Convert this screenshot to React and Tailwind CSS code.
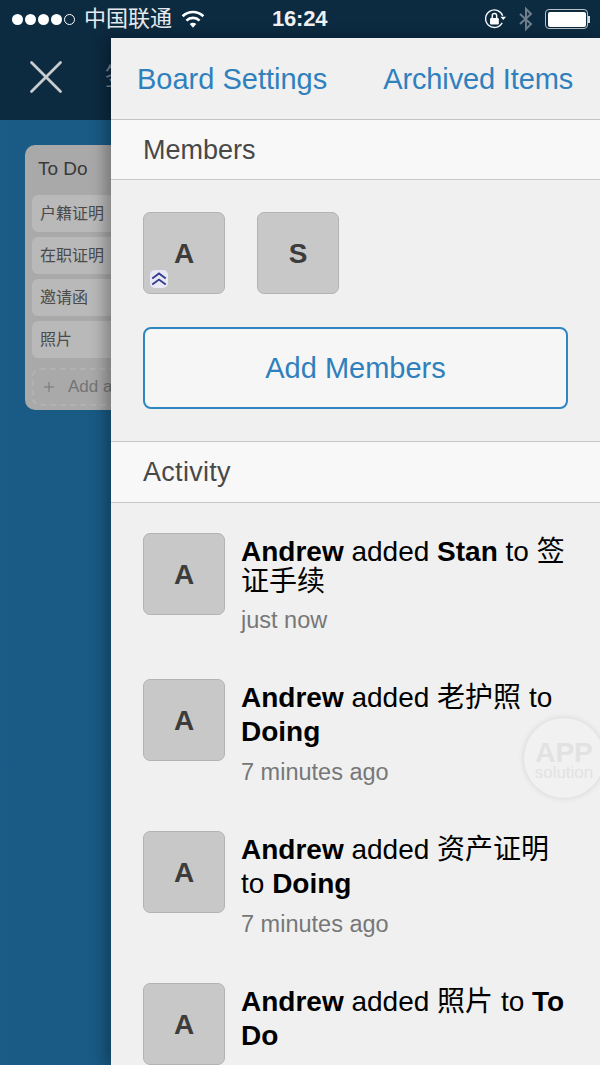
import { Plus, X } from "lucide-react";

const SANS = "font-['Liberation_Sans','Noto_Sans_CJK_SC',sans-serif]";

const cards = ["户籍证明", "在职证明", "邀请函", "照片"];

const activity = [
  {
    id: 1,
    lines: "pt-[4px] leading-[30px]",
    gap: "h-[146px]",
    time: "just now",
    text: (
      <>
        <b>Andrew</b> added <b>Stan</b> to 签证手续
      </>
    ),
  },
  {
    id: 2,
    lines: "pt-[2px] leading-[34px]",
    gap: "h-[152px]",
    time: "7 minutes ago",
    text: (
      <>
        <b>Andrew</b> added 老护照 to <b>Doing</b>
      </>
    ),
  },
  {
    id: 3,
    lines: "pt-[2px] leading-[34px]",
    gap: "h-[152px]",
    time: "7 minutes ago",
    text: (
      <>
        <b>Andrew</b> added 资产证明 to <b>Doing</b>
      </>
    ),
  },
  {
    id: 4,
    lines: "pt-[2px] leading-[34px]",
    gap: "h-[152px]",
    time: "",
    text: (
      <>
        <b>Andrew</b> added 照片 to <b>To Do</b>
      </>
    ),
  },
];

const Avatar = ({ letter, children }) => (
  <div className="relative flex h-[82px] w-[82px] shrink-0 items-center justify-center rounded-[7px] border border-[#b4b4b4] bg-[#c8c8c8] pt-[1px] text-[28px] font-bold text-[#3c3c3c]">
    {letter}
    {children}
  </div>
);

const StatusBar = () => (
  <div className="flex h-[38px] shrink-0 items-center bg-[#0c2a40] pl-[12px] pr-[10px] text-white">
    <div className="flex items-center gap-[2px]">
      {[0, 1, 2, 3].map((i) => (
        <span key={i} className="h-[11px] w-[11px] rounded-full bg-white" />
      ))}
      <span className="h-[11px] w-[11px] rounded-full border border-white" />
    </div>
    <span className="ml-[9px] text-[22px] leading-none text-[#e6eaed]">中国联通</span>
    <svg className="ml-[9px]" width="24" height="20" viewBox="0 0 22 18" fill="none" stroke="white" strokeWidth="2.4">
      <path d="M1.5 6.5a13.5 13.5 0 0 1 19 0" />
      <path d="M5 10.5a8.5 8.5 0 0 1 12 0" />
      <path d="M11 17l-3-3.4a4.2 4.2 0 0 1 6 0z" fill="white" stroke="none" />
    </svg>
    <span className="ml-[67px] text-[22px] font-bold leading-none tracking-[-0.2px] text-[#f0f0f0]">16:24</span>
    <div className="ml-auto flex items-center">
      <svg width="22" height="22" viewBox="0 0 20 20" fill="none">
        <path d="M16.5 13.5A8 8 0 1 1 17 7" stroke="white" strokeWidth="1.2" />
        <path d="M15 8h5l-2.5 3z" fill="white" />
        <rect x="5.5" y="9" width="8" height="6" rx="1" fill="white" />
        <path d="M7.5 9V7a2 2 0 0 1 4 0v2" stroke="white" strokeWidth="1.3" />
      </svg>
      <svg className="ml-[12px]" width="16" height="28" viewBox="0 0 16 24" fill="none" stroke="#6f7f8b" strokeWidth="2">
        <path d="M2 7l11 10-5 5V2l5 5L2 17" />
      </svg>
      <div className="ml-[11px] flex items-center">
        <div className="h-[20px] w-[43px] rounded-[4px] border border-[#b9c1c6] p-[1.5px]">
          <div className="h-full w-full rounded-[2px] bg-white" />
        </div>
        <div className="h-[7px] w-[2px] bg-[#d8dde0]" />
      </div>
    </div>
  </div>
);

const Board = () => (
  <div className="min-h-0 flex-1 bg-[linear-gradient(90deg,#1a5c87,#154f76)] pl-[25px] pt-[25px]">
    <div className="h-[265px] w-[200px] rounded-[10px] bg-[#a9a9a9] px-[7px]">
      <div className="h-[50px] pl-[6px] pt-[13px] text-[19px] leading-[22px] text-[#3a3a3a]">To Do</div>
      <div className="flex flex-col gap-[5px]">
        {cards.map((card) => (
          <div key={card} className="h-[37px] rounded-[6px] bg-[#b9b9b9] pl-[8px] text-[16px] leading-[37px] text-[#4a4a4a]">
            {card}
          </div>
        ))}
      </div>
      <div className="mt-[10px] flex h-[38px] items-center rounded-[8px] border-2 border-dashed border-[#b2b2b2] pl-[7px] text-[17px] text-[#747474]">
        <Plus size={16} strokeWidth={1.5} />
        <span className="ml-[11px]">Add a card</span>
      </div>
    </div>
  </div>
);

export default function App() {
  return (
    <div className={`relative flex h-[1065px] w-[600px] flex-col overflow-hidden ${SANS}`}>
      <StatusBar />
      <div className="flex h-[82px] shrink-0 items-center bg-[#0c2a40] pb-[4px] pl-[17px]">
        <X size={58} strokeWidth={1.15} className="text-[#c9cdd0]" />
        <span className="ml-[30px] text-[24px] text-[#7c8993]">签</span>
      </div>
      <Board />

      {/* drawer over the board */}
      <div className="absolute bottom-0 left-[111px] right-0 top-[38px] bg-[#f0f0f0] shadow-[-6px_0_14px_rgba(0,0,0,0.3)]">
        <div className="flex h-[82px] items-center justify-between border-b border-[#c4c4c4] pl-[26px] pr-[27px] pt-[2px] text-[29px] text-[#2f80bd]">
          <span>Board Settings</span>
          <span className="tracking-[-0.15px]">Archived Items</span>
        </div>
        <div className="flex h-[60px] items-center border-b border-[#c8c8c8] bg-[#f8f8f8] pl-[32px] pt-[2px] text-[27px] text-[#484848]">
          Members
        </div>
        <div className="px-[32px] pt-[32px]">
          <div className="flex gap-[32px]">
            <Avatar letter="A">
              <div className="absolute bottom-[5px] left-[6px] flex h-[18px] w-[18px] items-center justify-center rounded-[5px] bg-[#e9e9f6]">
                <svg width="16" height="16" viewBox="0 0 13 13" fill="none" stroke="#333a8c" strokeWidth="1.5">
                  <path d="M1 6L6.5 2l5.5 4" />
                  <path d="M1 11l5.5-4 5.5 4" />
                </svg>
              </div>
            </Avatar>
            <Avatar letter="S" />
          </div>
          <div className="mt-[33px] flex h-[82px] w-[425px] items-center justify-center rounded-[8px] border-2 border-[#2f86c0] bg-[#f6f6f6] pt-[2px] text-[29px] text-[#2f80bd]">
            Add Members
          </div>
        </div>
        <div className="mt-[32px] flex h-[62px] items-center border-y border-[#c8c8c8] bg-[#f8f8f8] pl-[32px] text-[27px] tracking-[0.3px] text-[#484848]">
          Activity
        </div>
        <div className="pl-[32px] pt-[30px]">
          {activity.map((item) => (
            <div key={item.id} className={`flex ${item.gap}`}>
              <Avatar letter="A" />
              <div className="ml-[16px] w-[330px]">
                <p className={`text-[28px] text-black ${item.lines}`}>{item.text}</p>
                <p className="mt-[8px] text-[23.5px] leading-[30px] text-[#777777]">{item.time}</p>
              </div>
            </div>
          ))}
        </div>
      </div>

      {/* floating watermark */}
      <div className="absolute left-[524px] top-[718px] flex h-[80px] w-[80px] flex-col items-center rounded-full bg-[#f1f1f1] pt-[23px] shadow-[0_0_6px_rgba(0,0,0,0.12)]">
        <span className="text-[28px] font-bold leading-[24px] text-[#e2e2e2]">APP</span>
        <span className="text-[17px] leading-[15px] text-[#e2e2e2]">solution</span>
      </div>
    </div>
  );
}
